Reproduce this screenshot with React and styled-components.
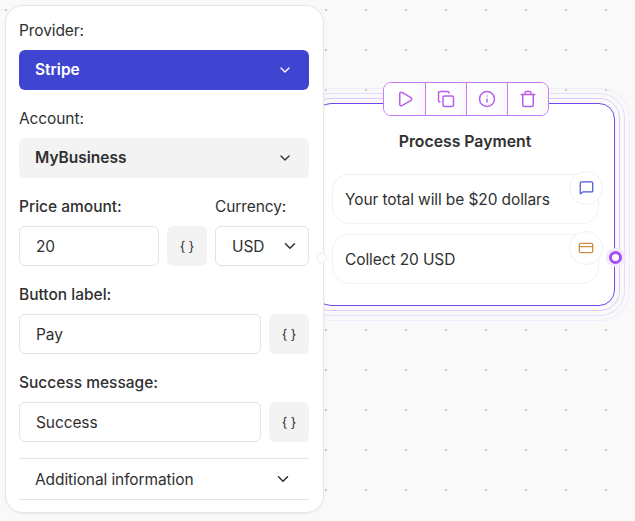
import styled, { createGlobalStyle } from "styled-components";
import { ChevronDown, Copy, CreditCard, Info, MessageSquare, Play, Trash } from "lucide-react";

const Global = createGlobalStyle`
  html, body { margin: 0; padding: 0; }
  body {
    font-family: Inter, "Liberation Sans", sans-serif;
    color: #303030;
    -webkit-font-smoothing: antialiased;
  }
  * { box-sizing: border-box; }
`;

const Canvas = styled.div`
  position: relative;
  width: 635px;
  height: 521px;
  overflow: hidden;
  padding: 5px 0 0 5px;
  background-color: #f9f9f9;
  background-image: radial-gradient(circle at 1px 1px, #c6c6c6 1.1px, transparent 1.3px);
  background-size: 40px 40px;
  background-position: 5px 9px;
`;

const Panel = styled.aside`
  position: relative;
  z-index: 2;
  display: flex;
  flex-direction: column;
  gap: 18px;
  width: 319px;
  height: 508px;
  padding: 14px 14px 0 13px;
  background: #fff;
  border: 1px solid #e6e6e6;
  border-radius: 18px;
  box-shadow: 0 1px 3px rgba(0, 0, 0, 0.05);
`;

const Group = styled.div`
  display: flex;
  flex-direction: column;
  gap: 10px;
`;

const Label = styled.div`
  height: 20px;
  font-size: 15.5px;
  line-height: 22px;
  letter-spacing: ${(p) => (p.$strong ? "0" : "-0.1px")};
  font-weight: ${(p) => (p.$strong ? 500 : 400)};
`;

const Select = styled.div`
  display: flex;
  align-items: center;
  justify-content: space-between;
  height: 40px;
  padding: 0 16px 1px;
  border-radius: 6px;
  font-size: 15.5px;
  font-weight: 600;
  color: ${(p) => (p.$primary ? "#fff" : "#303030")};
  background: ${(p) => (p.$primary ? "#3f45d1" : "#f3f3f3")};
`;

const Row = styled.div`
  display: flex;
  gap: 8px;
`;

const Field = styled.div`
  display: flex;
  align-items: center;
  flex: 1;
  height: 40px;
  padding: 0 16px;
  background: #fff;
  border: 1px solid #e3e3e3;
  border-radius: 6px;
  font-size: 15.5px;
  letter-spacing: -0.1px;
`;

const VarButton = styled.div`
  display: flex;
  flex: none;
  align-items: center;
  justify-content: center;
  width: 40px;
  height: 40px;
  border-radius: 6px;
  background: #f3f3f3;
  font-size: 13px;
`;

const PriceColumn = styled(Group)`
  width: 188px;
`;

const CurrencyColumn = styled(Group)`
  width: 94px;
`;

const CurrencySelect = styled(Field)`
  justify-content: space-between;
  padding: 0 9.5px 0 16px;
`;

const Accordion = styled.div`
  display: flex;
  align-items: center;
  justify-content: space-between;
  height: 42px;
  margin-top: -2px;
  padding: 0 17px 0 16px;
  border-top: 1px solid #e3e3e3;
  border-bottom: 1px solid #e3e3e3;
  font-size: 15.5px;
  letter-spacing: -0.1px;
`;

const Ring = styled.div`
  padding: 4px;
  border: 1px solid ${(p) => p.$color};
  border-radius: ${(p) => p.$radius}px;
`;

const NodeFrame = styled(Ring)`
  position: absolute;
  left: 300px;
  top: 88px;
  z-index: 1;
`;

const Node = styled.div`
  position: relative;
  display: flex;
  flex-direction: column;
  gap: 10.5px;
  width: 300px;
  height: 203px;
  padding: 0 15.5px;
  background: #fff;
  border: 1.5px solid #7446f0;
  border-radius: 16px;
`;

const Toolbar = styled.div`
  position: absolute;
  left: 67px;
  top: -22px;
  display: flex;
  height: 34px;
  background: #fff;
  border: 1.5px solid #c77dfa;
  border-radius: 8px;
  overflow: hidden;
`;

const ToolButton = styled.div`
  display: flex;
  align-items: center;
  justify-content: center;
  width: 41px;
  color: #b85cf0;
  background: linear-gradient(90deg, #fff 70%, #f7f7f7);
  & + & {
    border-left: 1.5px solid #c77dfa;
  }
`;

const Title = styled.div`
  margin-top: 27px;
  margin-bottom: 12.5px;
  height: 20px;
  font-size: 15.8px;
  font-weight: 600;
  line-height: 22px;
  text-align: center;
`;

const Message = styled.div`
  position: relative;
  display: flex;
  align-items: center;
  height: 49.5px;
  padding: 1px 0 0 12.5px;
  border: 1.5px solid #f1f1f1;
  border-radius: 17px;
  font-size: 15.5px;
  letter-spacing: -0.1px;
  background: #fff;
`;

const Badge = styled.div`
  position: absolute;
  right: -5.5px;
  top: -4.5px;
  display: flex;
  align-items: center;
  justify-content: center;
  width: 34px;
  height: 34px;
  border: 1.5px solid #f1f1f1;
  border-radius: 50%;
  background: #fff;
  color: ${(p) => p.$color};
`;

const OutHandle = styled.div`
  position: absolute;
  right: -7.5px;
  top: 147px;
  width: 13px;
  height: 13px;
  border: 3px solid #a64df5;
  border-radius: 50%;
  background: #fff;
  box-shadow: 0 0 0 3px #f1eafc;
`;

const InHandle = styled.div`
  position: absolute;
  left: 317px;
  top: 253px;
  z-index: 3;
  width: 10px;
  height: 10px;
  border: 1px solid #ececec;
  border-radius: 50%;
  background: #fff;
`;

const Chevron = ({ size = 16 }) => <ChevronDown size={size} strokeWidth={2} />;

export default function App() {
  return (
    <Canvas>
      <Global />
      <Panel>
        <Group>
          <Label>Provider:</Label>
          <Select $primary>
            Stripe
            <Chevron />
          </Select>
        </Group>
        <Group>
          <Label>Account:</Label>
          <Select>
            MyBusiness
            <Chevron />
          </Select>
        </Group>
        <Row>
          <PriceColumn>
            <Label $strong>Price amount:</Label>
            <Row>
              <Field>20</Field>
              <VarButton>{"{ }"}</VarButton>
            </Row>
          </PriceColumn>
          <CurrencyColumn>
            <Label>Currency:</Label>
            <CurrencySelect>
              USD
              <Chevron size={18} />
            </CurrencySelect>
          </CurrencyColumn>
        </Row>
        <Group>
          <Label $strong>Button label:</Label>
          <Row>
            <Field>Pay</Field>
            <VarButton>{"{ }"}</VarButton>
          </Row>
        </Group>
        <Group>
          <Label $strong>Success message:</Label>
          <Row>
            <Field>Success</Field>
            <VarButton>{"{ }"}</VarButton>
          </Row>
        </Group>
        <Accordion>
          Additional information
          <Chevron size={18} />
        </Accordion>
      </Panel>
      <InHandle />
      <NodeFrame $color="#f0ebfd" $radius={30}>
        <Ring $color="#e6dcfb" $radius={25}>
          <Ring $color="#dccbfa" $radius={20}>
            <Node>
              <Toolbar>
                <ToolButton>
                  <Play size={18} strokeWidth={2} />
                </ToolButton>
                <ToolButton>
                  <Copy size={18} strokeWidth={2} />
                </ToolButton>
                <ToolButton>
                  <Info size={18} strokeWidth={2} />
                </ToolButton>
                <ToolButton>
                  <Trash size={18} strokeWidth={2} />
                </ToolButton>
              </Toolbar>
              <Title>Process Payment</Title>
              <Message>
                Your total will be $20 dollars
                <Badge $color="#4a56d8">
                  <MessageSquare size={15} strokeWidth={2} />
                </Badge>
              </Message>
              <Message>
                Collect 20 USD
                <Badge $color="#cc8f45">
                  <CreditCard size={16} strokeWidth={2} />
                </Badge>
              </Message>
              <OutHandle />
            </Node>
          </Ring>
        </Ring>
      </NodeFrame>
    </Canvas>
  );
}
